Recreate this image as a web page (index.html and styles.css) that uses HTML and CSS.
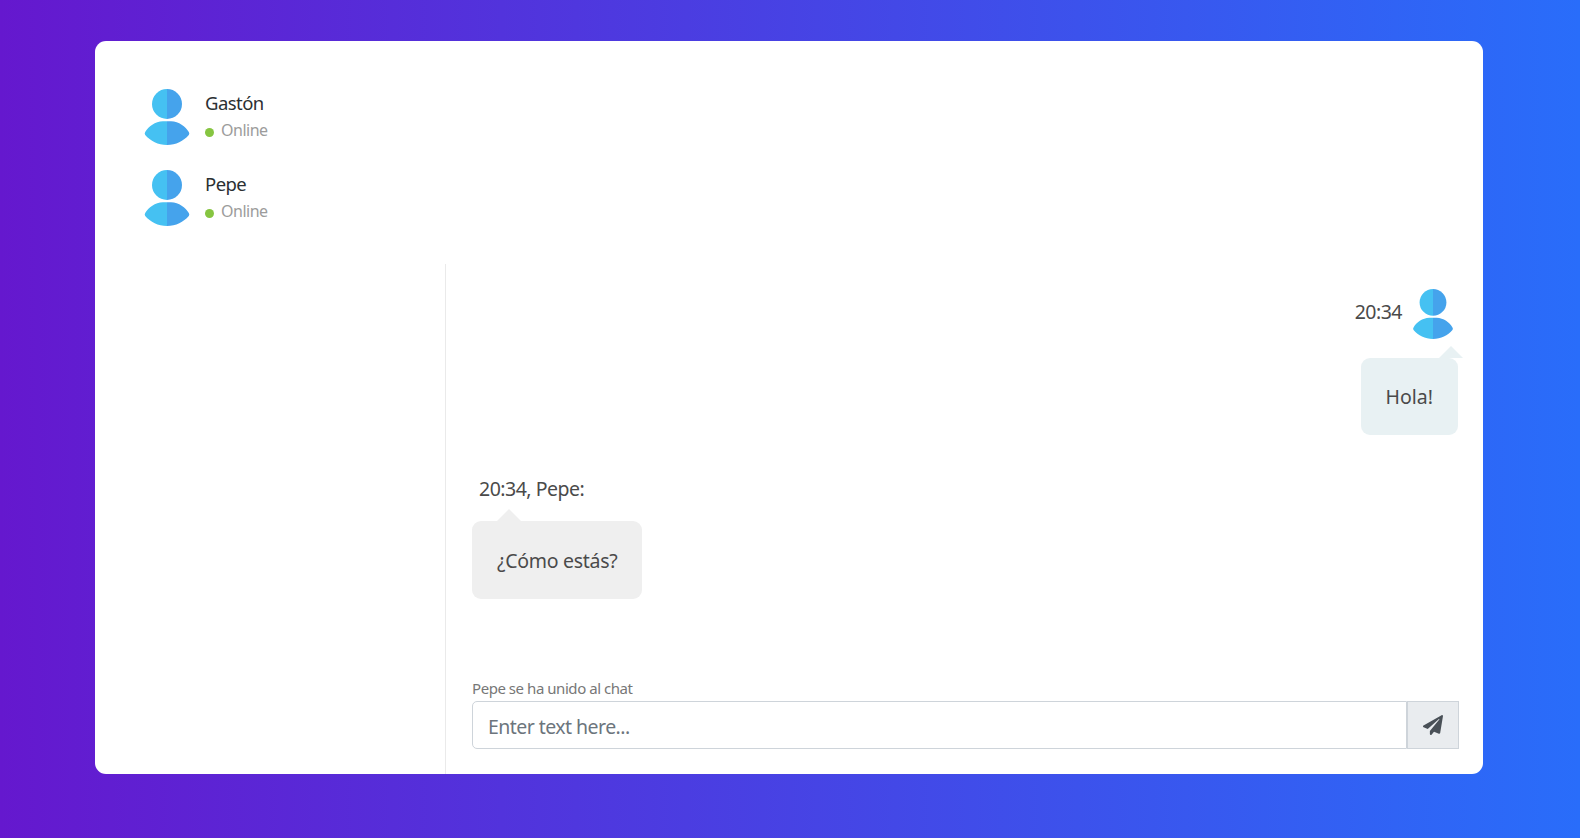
FILE: index.html
```
<!DOCTYPE html>
<html lang="es">
<head>
    <meta charset="UTF-8">
    <title>Chat</title>
    <link rel="stylesheet" href="styles.css">
</head>
<body>
    <!-- avatar and icon symbols -->
    <svg class="symbols" width="0" height="0">
        <symbol id="avatar" viewBox="0 0 56 56">
            <path fill="#45c1f2" d="M28 0a15 15 0 0 0 0 30z"/>
            <path fill="#45a3ec" d="M28 0a15 15 0 0 1 0 30z"/>
            <path fill="#45c1f2" d="M28 32.3h-4C16 32.600 9.500 37.500 6.200 43Q5.200 44.500 6.200 46C11.500 52 19 56 28 56z"/>
            <path fill="#45a3ec" d="M28 32.3h4C40 32.600 46.500 37.500 49.800 43Q50.800 44.500 49.800 46C44.500 52 37 56 28 56z"/>
        </symbol>
        <symbol id="paper-plane" viewBox="0 0 512 512">
            <path fill="currentColor" d="M476 3.200L12.500 270.600c-18.100 10.400-15.800 35.600 2.200 43.200L121 358.400l287.300-253.200c5.500-4.900 13.300 2.600 8.600 8.300L176 407v80.500c0 23.600 28.500 32.900 42.500 15.800L282 426l124.600 52.200c14.200 6 30.400-2.900 33-18.200l72-432C515 7.800 493.300-6.800 476 3.200z"/>
        </symbol>
    </svg>

    <div class="card chat-app">
        <div class="people-list">
            <ul class="chat-list">
                <li>
                    <svg class="avatar"><use href="#avatar"/></svg>
                    <div class="about">
                        <div class="name">Gastón</div>
                        <div class="status"><i class="online"></i>Online</div>
                    </div>
                </li>
                <li>
                    <svg class="avatar"><use href="#avatar"/></svg>
                    <div class="about">
                        <div class="name">Pepe</div>
                        <div class="status"><i class="online"></i>Online</div>
                    </div>
                </li>
            </ul>
        </div>

        <div class="chat">
            <div class="chat-history">
                <div class="message-row right">
                    <div class="message-data">
                        <span class="message-time">20:34</span>
                        <svg class="avatar"><use href="#avatar"/></svg>
                    </div>
                    <div class="message other-message">Hola!</div>
                </div>
                <div class="message-row">
                    <div class="message-data">
                        <span class="message-time from">20:34, Pepe:</span>
                    </div>
                    <div class="message my-message">¿Cómo estás?</div>
                </div>
            </div>
            <div class="chat-message">
                <div class="notice">Pepe se ha unido al chat</div>
                <div class="input-group">
                    <input type="text" class="form-control" placeholder="Enter text here...">
                    <button class="send" aria-label="Enviar">
                        <svg><use href="#paper-plane"/></svg>
                    </button>
                </div>
            </div>
        </div>
    </div>
</body>
</html>
```

FILE: styles.css
```
* {
    box-sizing: border-box;
}
body {
    margin: 0;
    height: 838px;
    padding: 41px 97px 0 95px;
    overflow: hidden;
    background: linear-gradient(to right, #6518ce, #296dfa);
    font-family: "Segoe UI", "Noto Sans", "Open Sans", sans-serif;
    color: #4a4a4a;
}
.symbols {
    position: absolute;
}
.card {
    height: 733px;
    display: flex;
    flex-direction: column;
    background: #fff;
    border-radius: 11px;
}

/* people */
.people-list {
    height: 223px;
    padding: 36px 36px 0;
}
.chat-list {
    list-style: none;
    margin: 0;
    padding: 0;
}
.chat-list li {
    display: flex;
    height: 81px;
    padding: 12px 0 0 8px;
}
.chat-list .avatar {
    width: 56px;
    height: 56px;
}
.about {
    padding: 1px 0 0 10px;
}
.name {
    font-size: 18.5px;
    letter-spacing: -0.55px;
    line-height: 26px;
    margin-bottom: 1px;
    color: #2b2f33;
}
.status {
    display: flex;
    align-items: center;
    font-size: 16px;
    letter-spacing: -0.5px;
    line-height: 27px;
    color: #9c9c9c;
}
.online {
    width: 9px;
    height: 9px;
    margin: 4px 7px 0 0;
    border-radius: 50%;
    background: #86c541;
}

/* chat */
.chat {
    flex: 1;
    display: flex;
    flex-direction: column;
    margin-left: 350px;
    border-left: 1px solid #eaeaea;
}
.chat-history {
    flex: 1;
    padding: 25px 25px 0 26px;
}
.message-row {
    display: flex;
    flex-direction: column;
    align-items: flex-start;
    margin-bottom: 36px;
}
.message-row.right {
    align-items: flex-end;
}
.message-data {
    display: flex;
    margin-bottom: 19px;
}
.message-data .avatar {
    width: 50px;
    height: 50px;
}
.message-time {
    font-size: 19.5px;
    letter-spacing: -0.5px;
    line-height: 27px;
    margin: 9px 6px 0 0;
}
.message-time.from {
    margin: 4px 0 0 7px;
}
.message {
    position: relative;
    height: 77px;
    padding: 0 25px;
    border-radius: 9px;
    font-size: 19.5px;
    letter-spacing: -0.28px;
    line-height: 78px;
}
.message:after {
    content: "";
    position: absolute;
    bottom: 100%;
    border: 12.5px solid transparent;
    border-top: 0;
    border-bottom-width: 12px;
}
.other-message {
    letter-spacing: 0;
    background: #e8f1f3;
}
.other-message:after {
    right: -5px;
    border-bottom-color: #e8f1f3;
}
.my-message {
    height: 78px;
    line-height: 80px;
    background: #efefef;
}
.my-message:after {
    left: 25px;
    border-bottom-color: #efefef;
}

/* message box */
.chat-message {
    padding: 0 24px 25px 26px;
}
.notice {
    font-size: 15px;
    letter-spacing: -0.45px;
    line-height: 22px;
    margin-bottom: 2px;
    color: #777;
}
.input-group {
    display: flex;
    height: 48px;
}
.form-control {
    flex: 1;
    padding: 2px 15px 0;
    border: 1px solid #ced4da;
    border-radius: 5px 0 0 5px;
    font: inherit;
    font-size: 19.5px;
    letter-spacing: -0.55px;
}
.form-control::placeholder {
    color: #6c757d;
}
.send {
    width: 52px;
    padding: 0;
    display: flex;
    align-items: center;
    justify-content: center;
    background: #e9ecef;
    border: 1px solid #ced4da;
    color: #495057;
}
.send svg {
    width: 20px;
    height: 20px;
}
```
